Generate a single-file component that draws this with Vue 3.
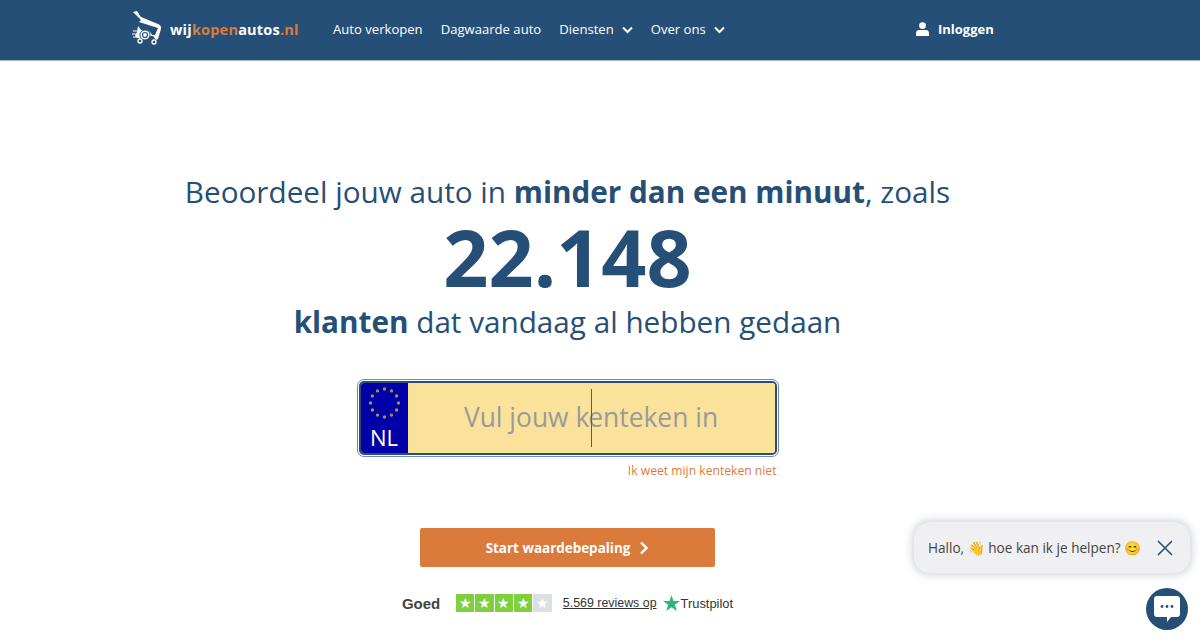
<script setup>
const stars = [0, 1, 2, 3, 4]
const eu = Array.from({ length: 12 }, (_, i) => {
  const a = (i * Math.PI) / 6
  return { x: 23.5 + 14 * Math.sin(a), y: 20 - 14 * Math.cos(a) }
})
</script>

<template>
  <div class="page">
    <header class="nav">
      <a class="logo">
        <svg class="logo-icon" width="32" height="36" viewBox="0 0 32 36">
          <path d="M1 2 5 1 9 7 26 14Q30 16 29 19L26 29 24 30 21 26H14L11 28H5L3 26 5 22 6 16 9 20H12Q18 20 20 25L23 25 26 18 7 12 9 10Z" fill="#fff"/>
          <circle cx="13" cy="25" r="5" fill="#fff" stroke="#264f78" stroke-width="1"/>
          <circle cx="13" cy="25" r="2.5" fill="none" stroke="#264f78" stroke-width="1.2"/>
          <circle cx="22" cy="32" r="2" fill="none" stroke="#fff" stroke-width="1.3"/>
          <circle cx="8" cy="31" r="2" fill="none" stroke="#fff" stroke-width="1.3"/>
          <path d="M1 21H5M0 24H4M1 27H5" stroke="#fff" stroke-width="1"/>
        </svg>
        <span class="wordmark">wij<em>kopen</em>autos<em>.nl</em></span>
      </a>
      <nav class="links">
        <a>Auto verkopen</a>
        <a>Dagwaarde auto</a>
        <a class="has-caret">Diensten
          <svg width="11" height="8" viewBox="0 0 11 8"><path d="M1 1.5 5.5 6 10 1.5" fill="none" stroke="#fff" stroke-width="2"/></svg>
        </a>
        <a class="has-caret">Over ons
          <svg width="11" height="8" viewBox="0 0 11 8"><path d="M1 1.5 5.5 6 10 1.5" fill="none" stroke="#fff" stroke-width="2"/></svg>
        </a>
      </nav>
      <a class="login">
        <svg width="13" height="14" viewBox="0 0 13 14"><circle cx="6.5" cy="3.6" r="3.4" fill="#fff"/><path d="M0 14V11.5Q0 8 3 8H10Q13 8 13 11.5V14Z" fill="#fff"/></svg>
        Inloggen
      </a>
    </header>

    <main class="hero">
      <p class="lead">Beoordeel jouw auto in <strong>minder dan een minuut</strong>, zoals</p>
      <p class="count">22.148</p>
      <p class="lead second"><strong>klanten</strong> dat vandaag al hebben gedaan</p>

      <div class="plate-block">
        <div class="plate">
          <div class="plate-inner">
            <div class="eu">
              <svg width="47" height="44" viewBox="0 0 47 44">
                <circle v-for="(s, i) in eu" :key="i" :cx="s.x" :cy="s.y" r="1.7" fill="#a98f4a"/>
              </svg>
              <span>NL</span>
            </div>
            <div class="plate-input">
              <span>Vul jouw k</span><i class="cursor"></i><span>enteken in</span>
            </div>
          </div>
        </div>
        <a class="forgot">Ik weet mijn kenteken niet</a>
      </div>

      <button class="cta">
        Start waardebepaling
        <svg width="10" height="14" viewBox="0 0 10 14"><path d="M2 1.5 7.5 7 2 12.5" fill="none" stroke="#fff" stroke-width="2.4"/></svg>
      </button>

      <div class="trust">
        <span class="goed">Goed</span>
        <div class="tp-stars">
          <span v-for="s in stars" :key="s" class="tp-star" :class="{ off: s === 4 }">★</span>
        </div>
        <a class="reviews">5.569 reviews op</a>
        <span class="tp-logo">
          <svg width="17" height="16" viewBox="0 0 17 16"><path d="M8.5 0 10.5 6H17L11.8 9.7 13.8 16 8.5 12.2 3.2 16 5.2 9.7 0 6H6.5Z" fill="#2fb67c"/></svg>
          Trustpilot
        </span>
      </div>
    </main>

    <div class="bubble">
      <span>Hallo, 👋 hoe kan ik je helpen? 😊</span>
      <svg width="16" height="16" viewBox="0 0 16 16"><path d="M1 1 15 15M15 1 1 15" stroke="#264f78" stroke-width="1.6"/></svg>
    </div>
    <div class="chat-btn">
      <svg width="28" height="30" viewBox="0 0 28 30">
        <path d="M4 2H24Q27 2 27 5V20Q27 23 24 23H18L14 28V23H4Q1 23 1 20V5Q1 2 4 2Z" fill="#fff"/>
        <circle cx="9" cy="12.5" r="1.4" fill="#264f78"/><circle cx="14" cy="12.5" r="1.4" fill="#264f78"/><circle cx="19" cy="12.5" r="1.4" fill="#264f78"/>
      </svg>
    </div>
  </div>
</template>

<style>
html, body { margin: 0; background: #fff; overflow: hidden; }
</style>

<style scoped>
.page {
  position: relative;
  width: 1200px;
  height: 640px;
  overflow: hidden;
  font-family: "Open Sans", sans-serif;
  color: #264f78;
}
.nav {
  height: 60px;
  background: #264f78;
  display: flex;
  align-items: center;
  padding: 0 0 2px 132px;
  box-sizing: border-box;
  color: #fff;
  box-shadow: 0 1px 0 #a9bccd;
}
.logo { display: flex; align-items: center; width: 201px; }
.logo-icon { margin-right: 6px; margin-top: -3px; }
.wordmark { font-size: 14.5px; font-weight: 700; letter-spacing: .2px; color: #fff; }
.wordmark em { font-style: normal; color: #dd7b39; }
.links { display: flex; gap: 18px; font-size: 13.1px; width: 583px; }
.links a { display: flex; align-items: center; gap: 6px; white-space: nowrap; }
.has-caret svg { margin-top: 2px; margin-left: 2px; }
.login { display: flex; align-items: center; gap: 9px; font-size: 13px; font-weight: 700; }

.hero {
  width: 1135px;
  display: flex;
  flex-direction: column;
  align-items: center;
}
.lead { margin: 112px 0 0; font-size: 29.7px; line-height: 40px; white-space: nowrap; }
.lead strong { font-weight: 700; }
.count { margin: 0; font-size: 79px; line-height: 90px; font-weight: 700; }
.lead.second { margin-top: 0; }

.plate-block {
  margin-top: 37px;
  width: 422px;
  display: flex;
  flex-direction: column;
  align-items: flex-end;
}
.plate {
  width: 422px;
  height: 78px;
  box-sizing: border-box;
  border: 1px solid #6f8ca8;
  border-radius: 7px;
  padding: 1px;
  background: #fff;
}
.plate-inner {
  height: 100%;
  box-sizing: border-box;
  display: flex;
  border: 2px solid #264f78;
  border-radius: 5px;
  overflow: hidden;
}
.eu {
  width: 47px;
  background: #0000a8;
  color: #fff;
  display: flex;
  flex-direction: column;
  align-items: center;
  font-size: 22px;
  line-height: 24px;
}
.eu svg { flex: none; }
.eu span { margin-top: -2px; }
.plate-input {
  flex: 1;
  background: #fbe29a;
  display: flex;
  align-items: center;
  justify-content: center;
  font-size: 26.4px;
  color: #9a9a9a;
  white-space: pre;
  position: relative;
  padding-bottom: 2px;
  box-sizing: border-box;
}
.cursor { width: 1px; height: 58px; background: #6b5a3a; margin: 0 -1px; position: relative; top: 1px; left: 3px; }
.forgot { font-size: 12.15px; line-height: 16px; color: #dd7b39; margin: 6px 2px 0 0; }

.cta {
  margin-top: 49px;
  width: 295px;
  height: 39px;
  border: 0;
  border-radius: 2px;
  background: #da7b3b;
  color: #fff;
  font: 700 13.45px "Open Sans", sans-serif;
  display: flex;
  align-items: center;
  justify-content: center;
  gap: 9px;
}

.trust {
  margin-top: 27px;
  display: flex;
  align-items: center;
  font-family: "Liberation Sans", sans-serif;
  color: #333;
}
.goed { font-size: 15px; font-weight: 700; width: 54px; color: #444; }
.tp-stars { display: flex; gap: 1px; margin-right: 11px; }
.tp-star {
  width: 18.4px;
  height: 18px;
  background: #7ed03e;
  color: #fff;
  font-size: 14px;
  line-height: 18px;
  text-align: center;
}
.tp-star.off { background: #dcdfe3; }
.reviews { font-size: 12.4px; text-decoration: underline; margin-right: 6px; }
.tp-logo { display: flex; align-items: center; gap: 1px; font-size: 12.9px; }

.bubble {
  position: absolute;
  left: 914px;
  top: 522px;
  width: 276px;
  height: 51px;
  box-sizing: border-box;
  padding: 0 17px 0 14px;
  display: flex;
  align-items: center;
  justify-content: space-between;
  background: #f0f0f2;
  border-radius: 16px;
  box-shadow: 0 0 8px 2px rgba(120, 135, 150, .35);
  font-size: 13.6px;
  color: #444;
}
.chat-btn {
  position: absolute;
  left: 1146px;
  top: 588px;
  width: 42px;
  height: 42px;
  border-radius: 50%;
  background: #264f78;
  display: flex;
  align-items: center;
  justify-content: center;
}
</style>
